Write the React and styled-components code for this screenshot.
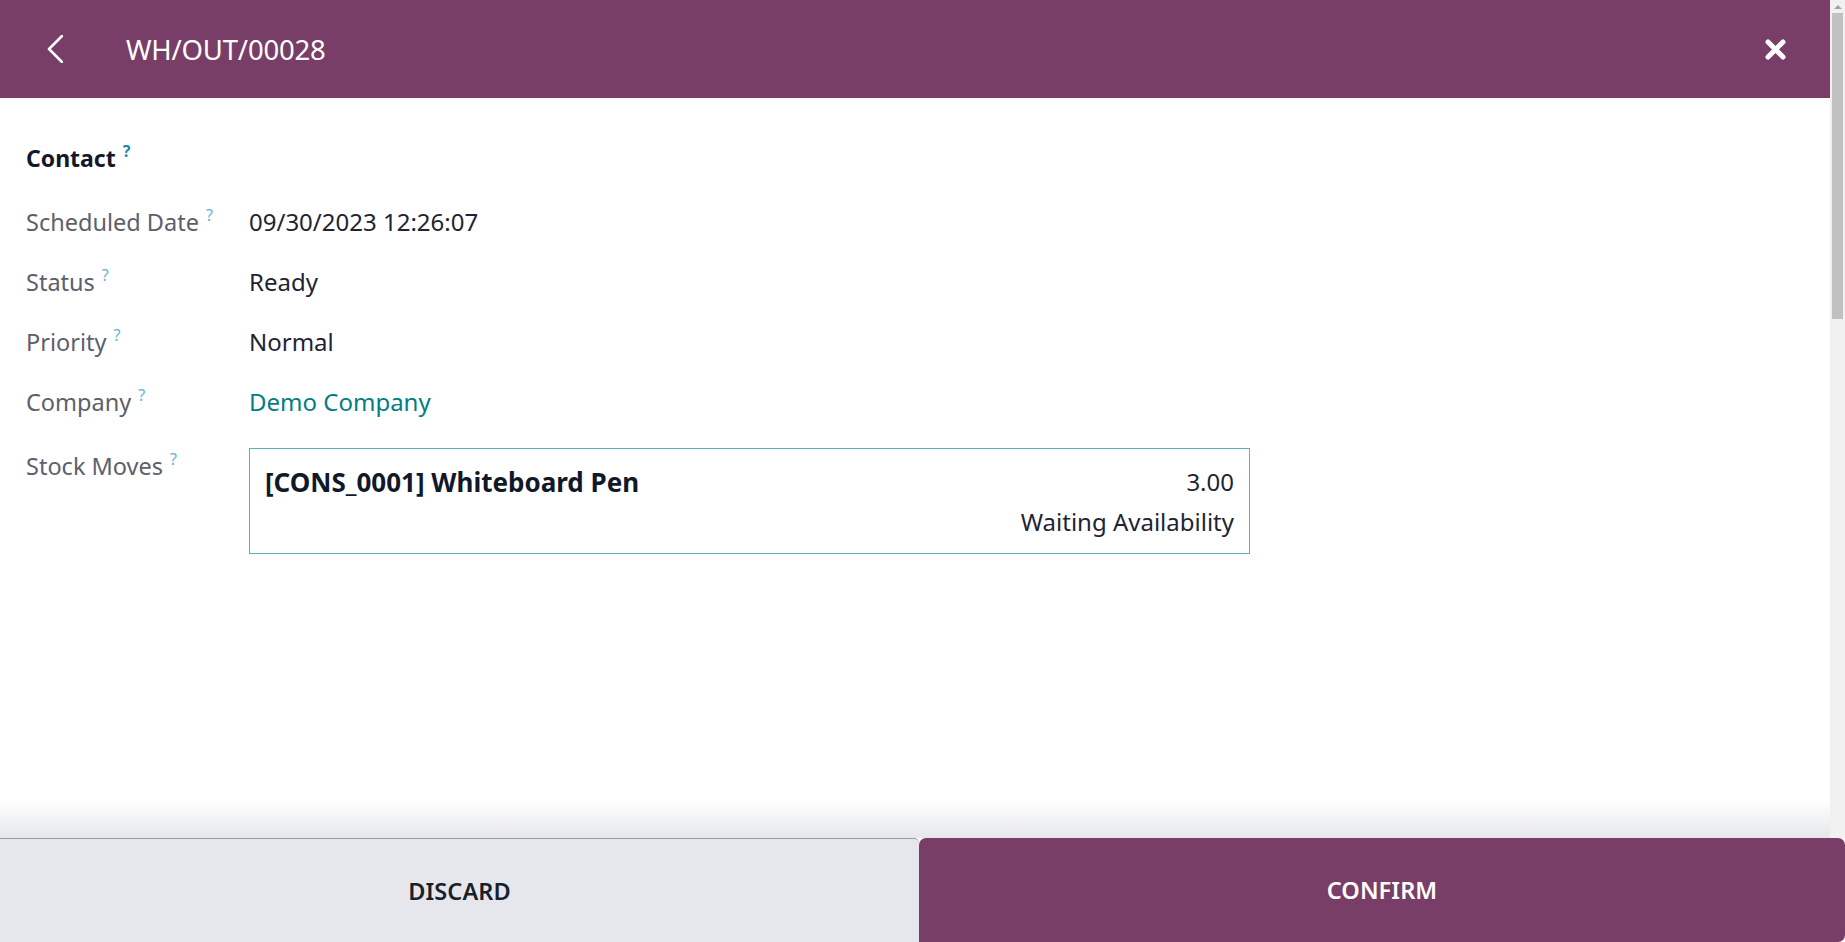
import React from "react";
import styled, { createGlobalStyle } from "styled-components";

const Global = createGlobalStyle`
  html, body {
    margin: 0;
    padding: 0;
    background: #ffffff;
    font-family: "Noto Sans", "Open Sans", sans-serif;
    overflow: hidden;
  }
`;

const Screen = styled.div`
  height: 100vh;
  display: flex;
  flex-direction: column;
`;

const Upper = styled.div`
  flex: 1;
  display: flex;
  min-height: 0;
`;

const Main = styled.div`
  flex: 1;
  display: flex;
  flex-direction: column;
  min-width: 0;
`;

const Header = styled.header`
  height: 98px;
  background: #793e67;
  display: flex;
  align-items: center;
  padding: 0 44px 0 47px;
  color: #ffffff;
`;

const Title = styled.h1`
  margin: 0 0 0 63px;
  flex: 1;
  font-size: 27.5px;
  font-weight: 400;
  letter-spacing: -0.2px;
`;

const IconButton = styled.span`
  display: flex;
  align-items: center;
`;

const Body = styled.div`
  flex: 1;
  padding: 30px 0 0 26px;
`;

const Row = styled.div`
  display: flex;
  align-items: ${(p) => (p.$top ? "flex-start" : "center")};
  min-height: 60px;
  margin-top: ${(p) => p.$gap || 0}px;
  padding-top: ${(p) => (p.$top ? 16 : 0)}px;
  box-sizing: border-box;
`;

const Label = styled.div`
  width: 223px;
  flex: none;
  font-size: ${(p) => (p.$strong ? 23 : 23.5)}px;
  line-height: 30px;
  color: ${(p) => (p.$strong ? "#111827" : "#5d606b")};
  font-weight: ${(p) => (p.$strong ? 700 : 400)};
  padding-top: ${(p) => (p.$top ? 3 : 0)}px;
  white-space: nowrap;
`;

const Help = styled.sup`
  font-size: 16px;
  line-height: 0;
  margin-left: 7px;
  vertical-align: 10px;
  color: ${(p) => (p.$strong ? "#1c86ad" : "#5fb4d6")};
  font-weight: ${(p) => (p.$strong ? 700 : 400)};
`;

const Value = styled.div`
  font-size: 24px;
  line-height: 30px;
  color: ${(p) => (p.$link ? "#017e84" : "#1f2433")};
`;

const MoveCard = styled.div`
  width: 1001px;
  height: 106px;
  box-sizing: border-box;
  border: 1px solid #5ab5b1;
  padding: 18px 15px 0 15px;
  display: flex;
  justify-content: space-between;
`;

const Product = styled.div`
  font-size: 26px;
  font-weight: 700;
  color: #111827;
  line-height: 30px;
`;

const MoveInfo = styled.div`
  display: flex;
  flex-direction: column;
  align-items: flex-end;
  gap: 10px;
  font-size: 24px;
  line-height: 30px;
  color: #1f2433;
`;

const Fade = styled.div`
  height: 38px;
  background: linear-gradient(to bottom, rgba(255,255,255,0), #e6e7ea);
`;

const Rail = styled.div`
  width: 15px;
  flex: none;
  background: #f1f1f1;
  display: flex;
  flex-direction: column;
  align-items: center;
`;

const RailArrow = styled.div`
  width: 0;
  height: 0;
  margin: 5px 0 4px;
  border-left: 4px solid transparent;
  border-right: 4px solid transparent;
  border-bottom: 4px solid #a3a3a3;
`;

const Thumb = styled.div`
  width: 11px;
  height: 306px;
  background: #c1c1c1;
`;

const Footer = styled.footer`
  height: 104px;
  display: flex;
`;

const ActionButton = styled.button`
  flex: none;
  width: ${(p) => p.$w}px;
  height: 100%;
  border: none;
  border-top: ${(p) => (p.$primary ? "none" : "1px solid #9a9ca3")};
  border-radius: ${(p) => (p.$primary ? "7px 7px 7px 0" : "0 5px 0 0")};
  background: ${(p) => (p.$primary ? "#793e67" : "#e6e7ec")};
  color: ${(p) => (p.$primary ? "#ffffff" : "#1a1f2c")};
  font-family: "Noto Sans", "Open Sans", sans-serif;
  font-size: 23.5px;
  font-weight: 600;
  letter-spacing: 0.1px;
  padding: 0;
`;

function BackIcon() {
  return (
    <svg width="16" height="28" viewBox="0 0 16 28">
      <path d="M15 1 L2 14 L15 27" fill="none" stroke="#fff" strokeWidth="2.6" strokeLinecap="round" strokeLinejoin="round" />
    </svg>
  );
}

function CloseIcon() {
  return (
    <svg width="21" height="21" viewBox="0 0 21 21">
      <path d="M3 3 L18 18 M18 3 L3 18" stroke="#fff" strokeWidth="5" strokeLinecap="round" />
    </svg>
  );
}

const fields = [
  { label: "Scheduled Date", value: "09/30/2023 12:26:07" },
  { label: "Status", value: "Ready" },
  { label: "Priority", value: "Normal" },
  { label: "Company", value: "Demo Company", link: true },
];

export default function App() {
  return (
    <Screen>
      <Global />
      <Upper>
        <Main>
          <Header>
            <IconButton>
              <BackIcon />
            </IconButton>
            <Title>WH/OUT/00028</Title>
            <IconButton>
              <CloseIcon />
            </IconButton>
          </Header>
          <Body>
            <Row>
              <Label $strong>
                Contact<Help $strong>?</Help>
              </Label>
            </Row>
            {fields.map((f, i) => (
              <Row key={f.label} $gap={i === 0 ? 4 : 0}>
                <Label>
                  {f.label}
                  <Help>?</Help>
                </Label>
                <Value $link={f.link}>{f.value}</Value>
              </Row>
            ))}
            <Row $top>
              <Label $top>
                Stock Moves<Help>?</Help>
              </Label>
              <MoveCard>
                <Product>[CONS_0001] Whiteboard Pen</Product>
                <MoveInfo>
                  <span>3.00</span>
                  <span>Waiting Availability</span>
                </MoveInfo>
              </MoveCard>
            </Row>
          </Body>
          <Fade />
        </Main>
        <Rail>
          <RailArrow />
          <Thumb />
        </Rail>
      </Upper>
      <Footer>
        <ActionButton $w={919}>DISCARD</ActionButton>
        <ActionButton $w={926} $primary>CONFIRM</ActionButton>
      </Footer>
    </Screen>
  );
}
